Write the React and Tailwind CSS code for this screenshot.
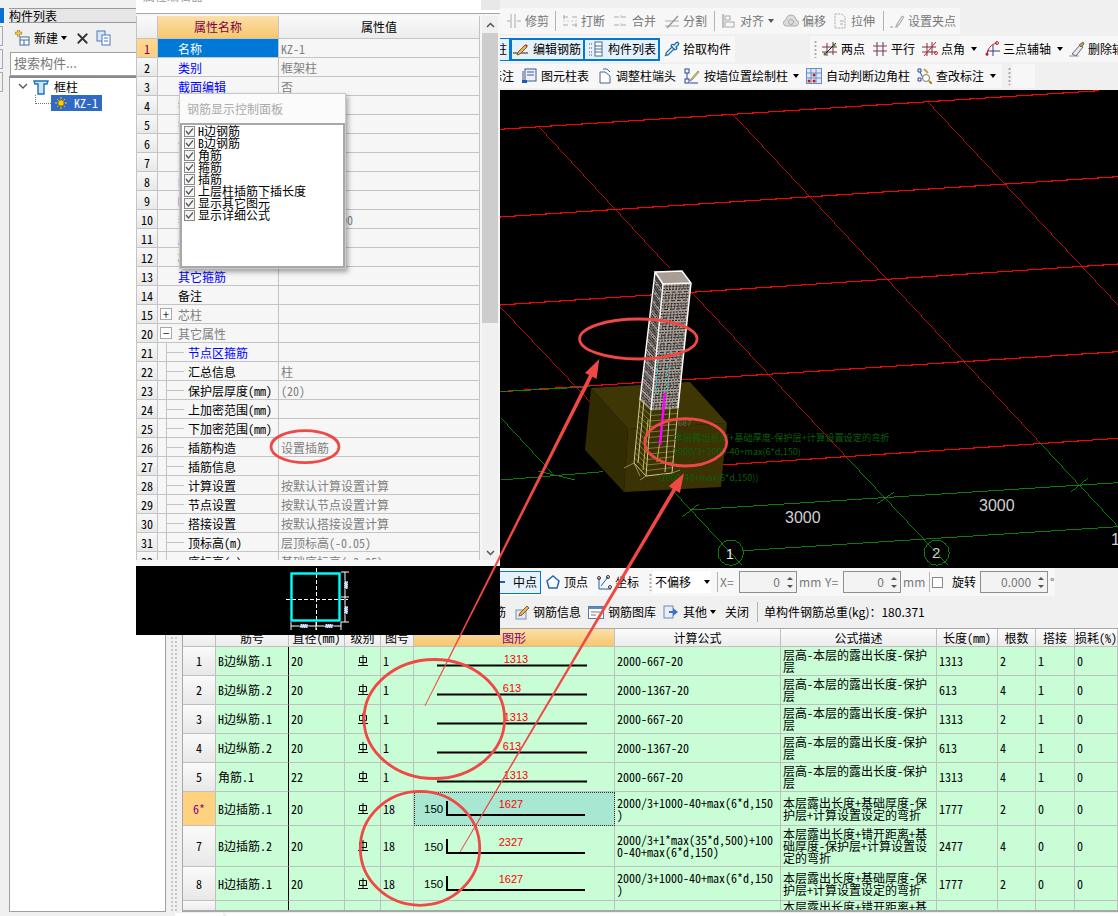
import { Pipette, X as XIcon } from 'lucide-react';

const MONO = "font-['Noto_Sans_Mono_CJK_SC','Noto_Sans_CJK_SC',monospace]";

function Ico({ children, className = '' }) {
  return (
    <svg width="16" height="16" viewBox="0 0 16 16" fill="none" className={`shrink-0 ${className}`}>
      {children}
    </svg>
  );
}

const Caret = ({ className = '' }) => (
  <span className={`h-0 w-0 shrink-0 border-x-[3px] border-t-[4px] border-x-transparent border-t-black ${className}`} />
);
const Sep = ({ className = '' }) => <span className={`h-[20px] w-px shrink-0 bg-[#b4b4b4] ${className}`} />;
const Grip = ({ className = '' }) => (
  <span className={`h-[18px] w-[3px] shrink-0 bg-[radial-gradient(circle,#a8a8a8_1px,transparent_1.2px)] bg-[length:3px_4px] ${className}`} />
);

function Tool({ icon, label, className = '', gap = 'gap-[3px]', muted }) {
  return (
    <span className={`flex shrink-0 items-center ${gap} ${muted ? 'text-[#777]' : 'text-black'} ${className}`}>
      {icon}
      <span className="whitespace-nowrap">{label}</span>
    </span>
  );
}

// grey, disabled edit icons in the first toolbar
const iTrim = <Ico><path d="M5 1v14M9 1v14M1 8h3M11 8h4" stroke="#aaa" /></Ico>;
const iBreak = <Ico><path d="M1 4h5M10 4h5M1 12h5M10 12h5M2 2v4M14 10v4" stroke="#aaa" /><path d="M1 8h14" stroke="#ccc" strokeDasharray="2 2" /></Ico>;
const iMerge = <Ico><path d="M1 4h14M1 12h14" stroke="#aaa" strokeDasharray="5 2" /><path d="M8 2v3M8 10v3" stroke="#ccc" /></Ico>;
const iSplit = <Ico><path d="M1 13h14M1 8h14" stroke="#aaa" /><path d="M3 15 14 3" stroke="#999" strokeWidth="1.5" /></Ico>;
const iAlign = <Ico><path d="M2 1v14" stroke="#888" /><rect x="4" y="3" width="5" height="4" stroke="#aaa" /><rect x="4" y="9" width="9" height="5" stroke="#aaa" /></Ico>;
const iOffset = <Ico><path d="M4 13a3 3 0 0 1-1-6 5 5 0 0 1 10 0 3 3 0 0 1-1 6Z" fill="#ddd" stroke="#aaa" /><circle cx="8" cy="9" r="2.5" stroke="#aaa" /></Ico>;
const iStretch = <Ico><path d="M3 1h7l3 3v11H3Z" stroke="#aaa" strokeDasharray="2 1" /><path d="M8 8h4M8 11h3" stroke="#aaa" /></Ico>;
const iGripPen = <Ico><path d="M1 14h3M6 14h3" stroke="#999" /><path d="m8 11 5-8 2 1-5 8-3 1Z" fill="#ddd" stroke="#aaa" /></Ico>;

// active icons
const iEdit = <Ico><path d="M0 12h15" stroke="#222" /><path d="m5 11 7-7 2 2-7 7-3 1Z" fill="#e8b060" stroke="#8a6020" /><path d="m12 4 1-1 2 2-1 1Z" fill="#c33" /></Ico>;
const iList = <Ico><path d="M1 3h3M1 7h3M1 11h3M1 14h3" stroke="#555" strokeDasharray="1 1" /><rect x="7" y="1" width="7" height="14" fill="#fff" stroke="#4a6a90" /><path d="M7 5h7M7 8h7M7 11h7" stroke="#4a6a90" /></Ico>;
const iTwoPoint = <Ico><path d="M5 2v13M11 1v13M0 6h15M0 11h15" stroke="#7a3040" /><path d="M2 14 14 2" stroke="#222" /><circle cx="3" cy="13" r="1.5" fill="#2a8a2a" /><circle cx="12" cy="4" r="1.5" fill="#2a8a2a" /></Ico>;
const iParallel = <Ico><path d="M5 1v14M11 1v14" stroke="#3a3a7a" /><path d="M1 5h14M1 10h14" stroke="#a03040" /></Ico>;
const iAngle = <Ico><path d="M5 2v13M10 1v13M0 6h14M0 11h14" stroke="#7a3040" /><path d="M2 15 14 1" stroke="#d02020" /><circle cx="14" cy="12" r="1.5" stroke="#d02020" /></Ico>;
const iThreePt = <Ico><path d="M3 15C3 8 7 3 13 2" stroke="#c02020" /><circle cx="3" cy="13" r="1.5" fill="#c02020" /><circle cx="13" cy="2" r="1.5" stroke="#c02020" /><path d="M9 4v11M3 10h13" stroke="#3a3a7a" /></Ico>;
const iEraser = <Ico><path d="M0 15h10" stroke="#999" /><path d="m3 13 8-9 3 2-7 9Z" fill="#e8e8f0" stroke="#667" /><path d="m10 4 4-3 1 2-3 3Z" fill="#c8a040" stroke="#765" /></Ico>;
const iTable = <Ico><rect x="3" y="1" width="11" height="12" fill="#eef" stroke="#3a5a90" /><path d="M5 4h7M5 7h7" stroke="#3a5a90" /><path d="M1 3v10" stroke="#3a5a90" /><rect x="0" y="12" width="5" height="3" fill="#2255bb" /></Ico>;
const iDocFold = <Ico><path d="M3 4h5l5 4v7H3Z" fill="#fff" stroke="#446688" /><path d="M6 1h4l3 3" stroke="#446688" /></Ico>;
const iWallCol = <Ico><rect x="1" y="1" width="4" height="4" stroke="#2244aa" /><rect x="1" y="11" width="4" height="4" stroke="#2244aa" /><path d="M3 5v6M6 15h8" stroke="#2244aa" /><path d="m7 11 7-8 1 1-7 8-2 1Z" fill="#e8c070" stroke="#996" /></Ico>;
const iGridDots = <Ico><rect x="0.5" y="0.5" width="15" height="15" fill="#dbe8fb" stroke="#6a8fc0" /><path d="M5 1v14M10 1v14M1 5h14" stroke="#6a8fc0" /><path d="M1 10h14" stroke="#6a8fc0" /><circle cx="3" cy="13" r="1.5" fill="#d01818" /><circle cx="8" cy="13" r="1.5" fill="#d01818" /><circle cx="8" cy="7" r="1.5" fill="#d01818" /></Ico>;
const iSearchMark = <Ico><path d="M2 1h3v3H2ZM2 10h3v3H2Z" stroke="#2244aa" /><path d="M4 4l3 6" stroke="#2244aa" /><circle cx="10" cy="10" r="3.5" fill="#fff" stroke="#7a7a60" /><path d="m13 13 3 3" stroke="#a88030" strokeWidth="2" /><path d="m8 1 4 4" stroke="#c8a040" strokeWidth="2" /></Ico>;
const iVertex = <Ico><path d="M8 2 14 7 12 14H4L2 7Z" stroke="#2268b8" strokeWidth="1.5" fill="#fff" /></Ico>;
const iCoord = <Ico><path d="M3 15V4M3 15h12M12 3 5 12" stroke="#2060b0" /><circle cx="3" cy="4" r="1.5" stroke="#333" /><circle cx="12" cy="3" r="1.5" stroke="#333" /><circle cx="14" cy="13" r="1.5" stroke="#333" /></Ico>;
const iInfo = <Ico><rect x="2" y="6" width="10" height="9" fill="#dfe8f4" stroke="#7890b0" /><path d="m6 9 7-7 2 2-7 7-3 1Z" fill="#e8b060" stroke="#8a6020" /></Ico>;
const iLib = <Ico><rect x="0.5" y="2.5" width="15" height="12" fill="#fff" stroke="#5a7aa8" /><rect x="1" y="3" width="14" height="2" fill="#5a8ac8" /><path d="M3 8h9M3 11h5" stroke="#777" /></Ico>;
const iOther = <Ico><rect x="1" y="2" width="9" height="12" fill="#e8eef8" stroke="#7088a8" /><path d="M6 7h4V4l5 4-5 4V9H6Z" fill="#3a70c8" /></Ico>;

function Spin({ value, className }) {
  return (
    <span className={`flex h-[22px] shrink-0 items-center justify-end border border-[#8e8e8e] bg-[#f3f3f3] pr-[3px] text-[#777] ${className}`}>
      <span>{value}</span>
      <span className="ml-[7px] flex flex-col gap-[5px]">
        <span className="h-0 w-0 border-x-[3px] border-b-[3px] border-x-transparent border-b-[#555]" />
        <span className="h-0 w-0 border-x-[3px] border-t-[3px] border-x-transparent border-t-[#555]" />
      </span>
    </span>
  );
}

function LeftPanel() {
  return (
    <div className="flex h-[912px] w-[166px] shrink-0">
      <div className="flex w-[9px] shrink-0 flex-col pt-2">
        <div className="h-[15px] w-[4px] bg-[#0a70d0]" />
        <div className="mt-[3px] h-[20px] w-[3px] border border-l-0 border-[#aaa]" />
        <div className="mt-[3px] h-[20px] w-[3px] border border-l-0 border-[#aaa]" />
        <div className="mt-[3px] h-[20px] w-[3px] border border-l-0 border-[#aaa]" />
      </div>
      <div className="flex min-w-0 flex-1 flex-col pt-2">
        <div className="flex h-[15px] items-center border-y border-[#9a9a9a] bg-[#e6e6e6] leading-none">构件列表</div>
        <div className="mt-[3px] flex h-[24px] items-center pl-[5px]">
          <svg width="16" height="16" viewBox="0 0 16 16" className="shrink-0">
            <path d="M2 3h3V0h3v3h3v3H8v3H5V6H2Z" fill="#f0d060" stroke="#a08020" transform="scale(.7)" />
            <rect x="6" y="7" width="9" height="8" fill="#fff" stroke="#3a6aa0" />
            <path d="M6 10h9M10 10v5" stroke="#3a6aa0" />
          </svg>
          <span className="ml-[4px]">新建</span>
          <Caret className="ml-[3px]" />
          <XIcon size={17} strokeWidth={2.5} className="ml-[7px] text-[#333]" />
          <svg width="16" height="16" viewBox="0 0 16 16" className="ml-[5px]">
            <rect x="1" y="1" width="8" height="10" fill="#d8e6f8" stroke="#4a78b8" />
            <rect x="6" y="5" width="8" height="10" fill="#fff" stroke="#4a78b8" />
            <path d="M8 8h4M8 11h4" stroke="#4a78b8" />
          </svg>
        </div>
        <div className="ml-px mt-[2px] flex h-[24px] items-center border border-[#a0a0a0] bg-white pb-[3px] pl-[3px] text-[13px] text-[#777]">搜索构件...</div>
        <div className={`flex-1 border-x border-b border-t-2 border-[#a0a0a0] border-t-[#8a8a8a] bg-white ${MONO}`}>
          <div className="flex h-[17px] items-center pl-[8px]">
            <svg width="10" height="8" viewBox="0 0 10 8" className="shrink-0"><path d="m1 1 4 4 4-4" stroke="#555" strokeWidth="1.3" fill="none" /></svg>
            <svg width="16" height="16" viewBox="0 0 16 16" className="ml-[5px] shrink-0">
              <path d="M1 2h14l-1 3h-3v10H5V5H2Z" fill="#cfe4f8" stroke="#1a70c0" strokeWidth="1.4" />
            </svg>
            <span className="ml-[5px]">框柱</span>
          </div>
          <div className="flex h-[16px] items-center pl-[25px]">
            <span className="h-[9px] w-[16px] -translate-y-[4px] border-b border-l border-dotted border-[#777]" />
            <span className="flex h-[16px] w-[51px] items-center bg-[#316ac5] pl-[4px] text-white">
              <svg width="12" height="12" viewBox="0 0 12 12" className="shrink-0">
                <circle cx="6" cy="6" r="3" fill="#fc0" stroke="#a80" />
                <path d="M6 0v12M0 6h12M2 2l8 8M10 2l-8 8" stroke="#fc0" strokeDasharray="2 8" strokeDashoffset="0" />
              </svg>
              <span className="ml-[7px]">KZ-1</span>
            </span>
          </div>
        </div>
      </div>
    </div>
  );
}

const BLUE = 'text-[#0000ff]';
const GREY = 'text-[#808080]';

const propRows = [
  { no: 1, name: '名称', value: 'KZ-1', selected: true },
  { no: 2, name: '类别', value: '框架柱', nameClass: BLUE },
  { no: 3, name: '截面编辑', value: '否', nameClass: BLUE },
  { no: 4, name: '截面宽度', value: '500' },
  { no: 5, name: '截面高度', value: '500' },
  { no: 6, name: '全部纵筋' },
  { no: 7, name: '角筋', nameClass: BLUE },
  { no: 8, name: 'B边中部筋', nameClass: BLUE },
  { no: 9, name: 'H边中部筋', nameClass: BLUE },
  { no: 10, name: '箍筋', value: ' C10@100/200', nameClass: BLUE },
  { no: 11, name: '肢数', nameClass: BLUE },
  { no: 12, name: '柱类型' },
  { no: 13, name: '其它箍筋', nameClass: BLUE },
  { no: 14, name: '备注' },
  { no: 15, name: '芯柱', nameClass: GREY, box: '+' },
  { no: 20, name: '其它属性', nameClass: GREY, box: '−' },
  { no: 21, name: '节点区箍筋', nameClass: BLUE, sub: true },
  { no: 22, name: '汇总信息', value: '柱', sub: true },
  { no: 23, name: '保护层厚度(mm)', value: '(20)', sub: true },
  { no: 24, name: '上加密范围(mm)', sub: true },
  { no: 25, name: '下加密范围(mm)', sub: true },
  { no: 26, name: '插筋构造', value: '设置插筋', sub: true },
  { no: 27, name: '插筋信息', sub: true },
  { no: 28, name: '计算设置', value: '按默认计算设置计算', sub: true },
  { no: 29, name: '节点设置', value: '按默认节点设置计算', sub: true },
  { no: 30, name: '搭接设置', value: '按默认搭接设置计算', sub: true },
  { no: 31, name: '顶标高(m)', value: '层顶标高(-0.05)', sub: true },
  { no: 32, name: '底标高(m)', value: '基础底标高(-3.05)', sub: true },
];

const panelItems = ['H边钢筋', 'B边钢筋', '角筋', '箍筋', '插筋', '上层柱插筋下插长度', '显示其它图元', '显示详细公式'];

function PropRow({ row }) {
  return (
    <div className="flex h-[19px] shrink-0 border-b border-[#c4c4c4] leading-[19px]">
      <div className={`flex w-[21px] shrink-0 justify-center border-r border-[#c4c4c4] bg-[linear-gradient(#f8f8f8,#e8e8e8)] ${row.selected ? 'bg-[linear-gradient(#ffd890,#ffcf80)] text-[#800060]' : ''}`}>{row.no}</div>
      <div className={`relative w-[121px] shrink-0 overflow-hidden whitespace-nowrap border-r border-[#c4c4c4] ${row.sub ? 'pl-[30px]' : 'pl-[20px]'} ${row.selected ? 'bg-[#0078d7] text-white' : row.nameClass || 'text-black'}`}>
        {row.box && (
          <span className="absolute left-[2px] top-[3px] flex h-[12px] w-[12px] items-center justify-center border border-[#a8a8a8] bg-white leading-none text-[#333]">{row.box}</span>
        )}
        {row.sub && (
          <>
            <span className="absolute bottom-0 left-[8px] top-0 w-px bg-[#c4c4c4]" />
            <span className="absolute left-[8px] top-[9px] h-px w-[18px] bg-[#c4c4c4]" />
          </>
        )}
        {row.name}
      </div>
      <div className={`min-w-0 flex-1 overflow-hidden whitespace-pre pl-[2px] ${GREY}`}>{row.value}</div>
    </div>
  );
}

function RebarPanel() {
  return (
    <div className="absolute left-[43px] top-[93px] flex h-[176px] w-[167px] flex-col border border-[#c8c8c8] bg-[#fbfbfb] shadow-[2px_3px_5px_rgba(0,0,0,0.35)]">
      <div className="flex h-[29px] shrink-0 items-center pl-[7px] font-['Noto_Sans_CJK_SC',sans-serif] text-[#aaa]">钢筋显示控制面板</div>
      <div className="flex-1 border-2 border-[#a8a8a8] bg-white pl-[2px]">
        {panelItems.map((item) => (
          <div key={item} className="flex h-[12px] items-center leading-[12px]">
            <span className="flex h-[11px] w-[11px] shrink-0 items-center justify-center border border-[#8a8a8a] bg-[#f4f4f4]">
              <svg width="9" height="9" viewBox="0 0 9 9"><path d="m1 4 2.5 3L8 1.5" stroke="#555" strokeWidth="1.2" fill="none" /></svg>
            </span>
            <span className="ml-[3px] whitespace-nowrap">{item}</span>
          </div>
        ))}
      </div>
    </div>
  );
}

function SectionPreview() {
  return (
    <svg width="364" height="69" viewBox="136 566 364 69" className="block shrink-0">
      <rect x="136" y="566" width="364" height="69" fill="#000" />
      <path d="M316.5 568v62M286 599.5h62" stroke="#fff" strokeDasharray="4 2" />
      <rect x="291.5" y="573.5" width="48" height="47" fill="none" stroke="#00ffff" strokeWidth="2.4" />
      <path d="M345 572v50M341 572h8M341 622h8M341 597h8M291 626h50M291 622v8M341 622v8M316 622v8" stroke="#fff" />
      <path d="M344 581h4v8h-4ZM344 606h4v8h-4ZM300 624h8v4h-8ZM325 624h8v4h-8Z" fill="#cfe0ff" stroke="#222" strokeDasharray="1 1" />
    </svg>
  );
}

function PropertyDialog() {
  return (
    <div className={`absolute left-[136px] top-0 flex h-[635px] w-[364px] flex-col bg-[#f6f6f6] ${MONO}`}>
      <div className="relative h-[14px] shrink-0 overflow-hidden border-b border-[#a8a8a8] bg-white">
        <span className="absolute left-[7px] top-[-10px] font-['Noto_Sans_CJK_SC',sans-serif] text-[#999]">属性编辑器</span>
        <span className="absolute right-0 top-0 h-[10px] w-[19px] bg-[#e8e8e8]" />
      </div>
      <div className="flex min-h-0 flex-1 items-start pt-[2px]">
        <div className="flex h-[544px] w-[344px] shrink-0 flex-col overflow-hidden border-x border-[#c4c4c4]">
          <div className="flex h-[23px] shrink-0 border-b border-[#c4c4c4] leading-[22px]">
            <div className="w-[21px] shrink-0 border-r border-[#c4c4c4] bg-[linear-gradient(#fafafa,#ececec)]" />
            <div className="w-[121px] shrink-0 border-r border-[#c4c4c4] bg-[linear-gradient(#fbe0a8,#f6c66e)] text-center text-[#800040]">属性名称</div>
            <div className="flex-1 bg-[linear-gradient(#fafafa,#ececec)] text-center">属性值</div>
          </div>
          {propRows.map((row) => <PropRow key={row.no} row={row} />)}
        </div>
        <div className="ml-[2px] flex h-[544px] w-[16px] shrink-0 flex-col bg-[#f0f0f0]">
          <div className="flex h-[17px] shrink-0 items-center justify-center">
            <svg width="9" height="6" viewBox="0 0 9 6"><path d="m1 5 3.5-3.5L8 5" stroke="#555" strokeWidth="1.5" fill="none" /></svg>
          </div>
          <div className="h-[290px] shrink-0 bg-[#cdcdcd]" />
          <div className="flex flex-1 items-end justify-center pb-[4px]">
            <svg width="9" height="6" viewBox="0 0 9 6"><path d="m1 1 3.5 3.5L8 1" stroke="#555" strokeWidth="1.5" fill="none" /></svg>
          </div>
        </div>
      </div>
      <SectionPreview />
      <RebarPanel />
    </div>
  );
}

// maps a height factor t (0 top, 1 bottom) onto a pillar edge
const lerp = (a, b, t) => [a[0] + (b[0] - a[0]) * t, a[1] + (b[1] - a[1]) * t];

function Pillar() {
  const upper = { l: [[655, 272], [640, 400]], f: [[663, 284], [651, 410]], r: [[691, 283], [678, 408]] };
  const lower = { l: [[640, 400], [634, 463]], f: [[651, 410], [646, 476]], r: [[678, 408], [672, 473]] };
  const mesh = [];
  for (let i = 1; i < 44; i++) {
    const t = i / 44;
    const a = lerp(upper.l[0], upper.l[1], t), b = lerp(upper.f[0], upper.f[1], t), c = lerp(upper.r[0], upper.r[1], t);
    mesh.push(<path key={`u${i}`} d={`M${a}L${b}L${c}`} stroke="#111" strokeWidth="0.9" strokeDasharray={i % 3 ? '2 1' : '4 2'} fill="none" />);
  }
  const vertical = [];
  for (let i = 1; i < 8; i++) {
    const u = i / 8;
    const top = lerp(upper.l[0], upper.f[0], u), bot = lerp(upper.l[1], upper.f[1], u);
    const top2 = lerp(upper.f[0], upper.r[0], u), bot2 = lerp(upper.f[1], upper.r[1], u);
    vertical.push(<path key={`v${i}`} d={`M${top}L${bot}M${top2}L${bot2}`} stroke="#2a2a2a" strokeWidth="0.7" strokeDasharray="6 4" />);
  }
  const lowerMesh = [];
  for (let i = 0; i < 12; i++) {
    const t = i / 12;
    const a = lerp(lower.l[0], lower.l[1], t), b = lerp(lower.f[0], lower.f[1], t), c = lerp(lower.r[0], lower.r[1], t);
    lowerMesh.push(<path key={`l${i}`} d={`M${a}L${b}L${c}`} stroke="#a8a468" fill="none" strokeWidth="0.6" />);
  }
  return (
    <g>
      <path d="M655 272 682 271 691 283 678 408 651 410 640 400Z" fill="#a89e96" />
      {mesh}
      {vertical}
      {lowerMesh}
      <path d="M640 400 634 463 646 476 672 473 678 408M651 410 646 476M644 400 638 463M670 408 665 472" stroke="#cdc98f" fill="none" />
      <path d="M634 463 624 468M634 463 640 476M672 473 680 470M646 476 640 480" stroke="#b8b478" strokeWidth="0.7" />
      <path d="M648 420 643 470M660 440 657 462" stroke="#c8c020" />
      <path d="M658 360 656 394M668 366 666 394" stroke="#00e8f0" strokeDasharray="2 2" />
      <path d="M665 393 660 445" stroke="#ff00ff" strokeWidth="2.5" />
      <path d="M655 272 682 271 691 283 663 284ZM655 272 640 400M663 284 651 410M691 283 678 408" stroke="#fff" strokeWidth="1.4" fill="none" />
    </g>
  );
}

function ModelView() {
  return (
    <svg width="952" height="478" viewBox="166 90 952 478" className="block shrink-0 bg-black">
      {/* main grid */}
      <g stroke="#ff0000" strokeWidth="1.1" fill="none" shapeRendering="crispEdges">
        <path d="M500 129.3 1099 90.7M500 217 1118 176.7M500 305 1118 264M500 391.6 1118 351.7M700 466.5 1118 438.3" />
      </g>
      <g stroke="#e01010" strokeWidth="0.8" fill="none" shapeRendering="crispEdges">
        <path d="M539.4 127.3 669.5 268M691 291.7 846 456.7M732.6 114 1039 441.7M927.6 101.7 1118 305M500 306.7 590 401.7" />
      </g>
      <g stroke="#0c8a0c" strokeWidth="0.9" fill="none" shapeRendering="crispEdges">
        <path d="M501 391.7 590 386.7M501 418 552 473M501 480 603 471.7M538 471 575 480" />
        <path d="M846 456.7 948 565M1039 441.7 1118 526.7M675 493 742 565" />
        <path d="M690 510 1118 482.7M743 550.7 1118 526.7" />
        <path d="M682 517 699 504M877 504 894 492M1071 492 1088 478" />
        <circle cx="730.7" cy="552.7" r="12.7" />
        <circle cx="936.7" cy="552.7" r="12.5" />
      </g>
      {/* foundation */}
      <path d="M591 388 690 382 727 423 628 429Z" fill="#3e3605" />
      <path d="M591 388 628 429 624 492 585 450Z" fill="#322c02" />
      <path d="M628 429 727 423 721 487 624 492Z" fill="#3b3304" />
      <Pillar />
      <g fill="#0b5f0b" className="font-['Noto_Sans_CJK_SC',sans-serif]">
        <text x="674" y="441" fontSize="9.2">本层露出长度+基础厚度-保护层+计算设置设定的弯折</text>
        <text x="673" y="455" fontSize="9">2000/3+1000-40+max(6*d,150)</text>
        <text x="658" y="481" fontSize="9">(1000-40+max(6*d,150))</text>
        <text x="678" y="426" fontSize="8" fill="#6a6a5a">687</text>
      </g>
      <g fill="#d0d0d0" className="font-['Liberation_Sans',sans-serif]" fontSize="16">
        <text x="785" y="523">3000</text>
        <text x="979" y="511">3000</text>
        <text x="1111" y="545">1</text>
        <text x="726" y="559" fontSize="14" fill="#eee">1</text>
        <text x="932" y="558" fontSize="15">2</text>
      </g>
    </svg>
  );
}

function Toolbars() {
  return (
    <>
      <div className="ml-[324px] mt-2 flex h-[26px] w-[470px] shrink-0 items-center gap-[8px] bg-[#f7f7f7] pl-[16px]">
        <Tool muted icon={iTrim} label="修剪" />
        <Sep className="-mx-[2px]" />
        <Tool muted icon={iBreak} label="打断" />
        <Tool muted icon={iMerge} label="合并" />
        <Tool muted icon={iSplit} label="分割" />
        <Sep className="-ml-[1px]" />
        <Tool muted icon={iAlign} label="对齐" className="-ml-[2px]" />
        <Caret className="-ml-[4px] !border-t-[#555]" />
        <Tool muted icon={iOffset} label="偏移" className="ml-[1px]" />
        <Tool muted icon={iStretch} label="拉伸" className="-ml-[2px]" />
        <Sep />
        <Tool muted icon={iGripPen} label="设置夹点" className="-ml-[3px]" />
      </div>

      <div className="mt-[2px] flex h-[26px] shrink-0 items-center">
        <div className="ml-[324px] flex h-full w-[245px] shrink-0 items-center bg-[#f7f7f7]">
          <span className="flex h-[23px] w-[20px] shrink-0 items-center justify-end border border-[#0078d7] bg-[#e5f1fb] pr-[2px]">柱</span>
          <span className="flex h-[23px] w-[75px] shrink-0 items-center gap-[4px] border-2 border-[#0078d7] bg-[#e5f1fb] pl-[1px]">{iEdit}编辑钢筋</span>
          <span className="flex h-[23px] w-[75px] shrink-0 items-center gap-[2px] border-2 border-l-0 border-[#0078d7] bg-[#e5f1fb] pl-[3px]">{iList}<span className="ml-[2px]">构件列表</span></span>
          <Tool icon={<Pipette size={16} className="text-[#1b6fb5]" />} label="拾取构件" className="ml-[4px]" />
        </div>
        <div className="ml-[75px] flex h-full flex-1 items-center overflow-hidden bg-[#f7f7f7] pl-[4px]">
          <Grip />
          <Tool icon={iTwoPoint} label="两点" className="ml-[5px]" />
          <Tool icon={iParallel} label="平行" className="ml-[7px]" />
          <Tool icon={iAngle} label="点角" className="ml-[7px]" />
          <Caret className="ml-[6px]" />
          <Tool icon={iThreePt} label="三点辅轴" className="ml-[7px]" />
          <Caret className="ml-[6px]" />
          <Tool icon={iEraser} label="删除辅轴" className="ml-[6px]" />
        </div>
      </div>

      <div className="mt-[2px] flex h-[24px] shrink-0 items-center">
        <div className="ml-[324px] flex h-full w-[512px] shrink-0 items-center bg-[#f7f7f7]">
          <span className="w-[24px] shrink-0 text-right">标注</span>
          <Tool icon={iTable} label="图元柱表" className="ml-[8px]" />
          <Tool icon={iDocFold} label="调整柱端头" className="ml-[8px]" />
          <Tool icon={iWallCol} label="按墙位置绘制柱" className="ml-[8px]" gap="gap-[4px]" />
          <Caret className="ml-[5px]" />
          <Tool icon={iGridDots} label="自动判断边角柱" className="ml-[7px]" gap="gap-[4px]" />
          <Tool icon={iSearchMark} label="查改标注" className="ml-[6px]" gap="gap-[4px]" />
          <Caret className="ml-[6px]" />
        </div>
        <Grip className="ml-[6px]" />
        <span className="ml-[1px] h-full w-[23px] bg-[#f7f7f7]" />
      </div>
    </>
  );
}

function SnapBar() {
  return (
    <div className="ml-[324px] flex h-[28px] w-[565px] shrink-0 items-center bg-[#f7f7f7]">
      <span className="flex h-[23px] w-[51px] shrink-0 items-center justify-end border border-[#0078d7] bg-[#e5f1fb] pr-[3px]">
        <span className="mr-[8px] h-[2px] w-[7px] bg-[#2060b0]" />
        中点
      </span>
      <Tool icon={iVertex} label="顶点" className="ml-[4px]" />
      <Tool icon={iCoord} label="坐标" className="ml-[8px]" />
      <Grip className="ml-[10px]" />
      <span className="ml-px flex h-[22px] w-[58px] shrink-0 items-center bg-white pl-[2px]">
        不偏移
        <Caret className="ml-[13px]" />
      </span>
      <Sep className="ml-[6px]" />
      <span className="ml-[2px] w-[19px] shrink-0 text-[#777]">X=</span>
      <Spin value="0" className="w-[58px]" />
      <span className="ml-[2px] w-[26px] shrink-0 text-[#777]">mm</span>
      <span className="w-[18px] shrink-0 text-[#777]">Y=</span>
      <Spin value="0" className="w-[58px]" />
      <span className="ml-[2px] w-[26px] shrink-0 text-[#777]">mm</span>
      <Sep />
      <span className="ml-[2px] h-[11px] w-[11px] shrink-0 border border-[#888] bg-white" />
      <span className="ml-[9px] shrink-0">旋转</span>
      <Spin value="0.000" className="ml-[4px] w-[68px]" />
      <span className="ml-[2px] text-[#555]">°</span>
    </div>
  );
}

function RebarBar() {
  return (
    <div className="ml-[324px] flex h-[30px] shrink-0 items-center pb-[2px]">
      <span className="w-[16px] shrink-0 text-right">筋</span>
      <Tool icon={iInfo} label="钢筋信息" className="ml-[8px]" />
      <Tool icon={iLib} label="钢筋图库" className="ml-[7px]" gap="gap-[4px]" />
      <Tool icon={iOther} label="其他" className="ml-[7px]" gap="gap-[4px]" />
      <Caret className="ml-[3px]" />
      <span className="ml-[9px]">关闭</span>
      <Sep className="ml-[8px]" />
      <span className="ml-[6px] whitespace-nowrap">单构件钢筋总重(kg)：180.371</span>
    </div>
  );
}

const COLS = 'grid-cols-[33px_73px_56px_36px_33px_201px_166px_156px_61px_38px_39px_43px]';
const layerDesc = '层高-本层的露出长度-保护层';
const dowelDesc = '本层露出长度+基础厚度-保护层+计算设置设定的弯折';
// the source grid breaks before the closing bracket, which CSS line breaking refuses to do
const f1 = '2000/3+1000-40+max(6*d,150\n)';

const rebars = [
  { no: '1', name: 'B边纵筋.1', d: 20, fig: 1, num: 1313, formula: '2000-667-20', desc: layerDesc, len: 1313, n: 2, lap: 1, h: 29 },
  { no: '2', name: 'B边纵筋.2', d: 20, fig: 1, num: 613, formula: '2000-1367-20', desc: layerDesc, len: 613, n: 4, lap: 1, h: 29 },
  { no: '3', name: 'H边纵筋.1', d: 20, fig: 1, num: 1313, formula: '2000-667-20', desc: layerDesc, len: 1313, n: 2, lap: 1, h: 29 },
  { no: '4', name: 'H边纵筋.2', d: 20, fig: 1, num: 613, formula: '2000-1367-20', desc: layerDesc, len: 613, n: 4, lap: 1, h: 29 },
  { no: '5', name: '角筋.1', d: 22, fig: 1, num: 1313, formula: '2000-667-20', desc: layerDesc, len: 1313, n: 4, lap: 1, h: 29 },
  { no: '6*', name: 'B边插筋.1', d: 20, fig: 18, num: 1627, formula: f1, desc: dowelDesc, len: 1777, n: 2, lap: 0, h: 34, active: true },
  { no: '7', name: 'B边插筋.2', d: 20, fig: 18, num: 2327, formula: '2000/3+1*max(35*d,500)+1000-40+max(6*d,150)', desc: '本层露出长度+错开距离+基础厚度-保护层+计算设置设定的弯折', len: 2477, n: 4, lap: 0, h: 41, dy: 4 },
  { no: '8', name: 'H边插筋.1', d: 20, fig: 18, num: 1627, formula: f1, desc: dowelDesc, len: 1777, n: 2, lap: 0, h: 34 },
  { no: '', name: '', d: '', fig: '', formula: '', desc: '本层露出长度+错开距离+基', h: 11, empty: true },
];

function Figure({ r }) {
  if (r.empty) return null;
  const hooked = r.fig === 18;
  const dy = r.dy || 0;
  return (
    <svg width="200" height={r.h - 1} className="block font-['Liberation_Sans',sans-serif]">
      {hooked ? (
        <>
          <path d={`M33 ${9 + dy}V${23 + dy}H171`} stroke="#000" strokeWidth="2" fill="none" />
          <text x="10" y={21 + dy} fontSize="11.5" fill="#000">150</text>
          <text x="97" y={16 + dy} fontSize="11" fill="#ff0000" textAnchor="middle">{r.num}</text>
        </>
      ) : (
        <>
          <path d="M23 18.5H173" stroke="#000" strokeWidth="2" />
          <text x={r.num === 613 ? 98 : 102} y="16" fontSize="11" fill="#ff0000" textAnchor="middle">{r.num}</text>
        </>
      )}
    </svg>
  );
}

function Grade() {
  return (
    <svg width="12" height="12" viewBox="0 0 12 12" className="mx-auto">
      <path d="M6 0v10M2.5 2.5h7v5h-7ZM1 10.5h10" stroke="#000" fill="none" />
    </svg>
  );
}

function RebarTable() {
  const cell = 'flex min-w-0 items-center border-r border-b border-[#c0c0c0] pl-[2px]';
  const head = 'flex items-center justify-center border-r border-b border-[#c0c0c0] bg-[linear-gradient(#fcfcfc,#ececec)] whitespace-nowrap overflow-hidden';
  return (
    <div className="flex h-[284px] shrink-0">
      <div className="w-[16px] shrink-0 pl-[4px]">
        <div className="h-full w-[8px] bg-[radial-gradient(circle,#c8c8c8_1px,transparent_1.2px)] bg-[length:4px_4px]" />
      </div>
      <div className={`min-w-0 flex-1 overflow-hidden border-b-2 border-l border-t border-[#a8a8a8] bg-white ${MONO}`}>
        <div className={`grid h-[18px] ${COLS}`}>
          <div className={head} />
          <div className={head}>筋号</div>
          <div className={head}>直径(mm)</div>
          <div className={head}>级别</div>
          <div className={head}>图号</div>
          <div className={`${head} !bg-[linear-gradient(#fbe0a8,#f6c66e)] text-[#800080]`}>图形</div>
          <div className={head}>计算公式</div>
          <div className={head}>公式描述</div>
          <div className={head}>长度(mm)</div>
          <div className={head}>根数</div>
          <div className={head}>搭接</div>
          <div className={head}>损耗(%)</div>
        </div>
        {rebars.map((r, i) => (
          <div key={i} style={{ height: r.h }} className={`grid ${COLS} bg-[#c8fdd6]`}>
            <div className={`${cell} justify-center !pl-0 ${r.active ? 'bg-[#ffd27f] text-[#800080]' : 'bg-[linear-gradient(#fafafa,#e8e8e8)]'}`}>{r.no}</div>
            <div className={`${cell} !border-r-black whitespace-nowrap`}>{r.name}</div>
            <div className={cell}>{r.d}</div>
            <div className={`${cell} !pl-0`}>{r.empty ? null : <Grade />}</div>
            <div className={cell}>{r.fig}</div>
            <div className={`${cell} !pl-0 ${r.active ? 'bg-[#a8e8d2] outline-1 -outline-offset-1 outline-dotted outline-[#333]' : ''}`}><Figure r={r} /></div>
            <div className={`${cell} whitespace-pre-line break-all pr-[3px] leading-[12px]`}>{r.formula}</div>
            <div className={`${cell} break-all leading-[12px] ${r.empty ? '!items-start' : ''}`}>{r.desc}</div>
            <div className={cell}>{r.len}</div>
            <div className={cell}>{r.n}</div>
            <div className={cell}>{r.lap}</div>
            <div className={cell}>{r.empty ? '' : 0}</div>
          </div>
        ))}
      </div>
    </div>
  );
}

// tapered callout arrow, thin at the start and widest just behind the head
function arrowPoints(x1, y1, x2, y2) {
  const len = Math.hypot(x2 - x1, y2 - y1);
  const ux = (x2 - x1) / len, uy = (y2 - y1) / len;
  const nx = -uy, ny = ux;
  const bx = x2 - ux * 19, by = y2 - uy * 19;
  const p = (x, y, w) => `${x + nx * w},${y + ny * w}`;
  return [p(x1, y1, 0.4), p(bx, by, 1.9), p(bx, by, 6.5), `${x2},${y2}`, p(bx, by, -6.5), p(bx, by, -1.9), p(x1, y1, -0.4)].join(' ');
}

function Callouts() {
  const ellipses = [
    [638.3, 339, 58.7, 20],
    [685.7, 442.3, 41, 23.7],
    [305, 446.7, 34, 16],
    [434.3, 719, 70.3, 59.5],
    [420, 848.3, 59.7, 57],
  ];
  return (
    <svg width="1118" height="916" className="pointer-events-none absolute left-0 top-0">
      {ellipses.map(([cx, cy, rx, ry]) => (
        <ellipse key={cx} cx={cx} cy={cy} rx={rx} ry={ry} fill="none" stroke="#f04844" strokeWidth="2.8" />
      ))}
      <polygon points={arrowPoints(425, 705.7, 599.3, 359)} fill="#f04844" />
      <polygon points={arrowPoints(460, 852, 684, 473.3)} fill="#f04844" />
    </svg>
  );
}

export default function App() {
  return (
    <div className="relative flex h-[916px] w-[1118px] overflow-hidden bg-[#f0f0f0] font-['Noto_Sans_CJK_SC',sans-serif] text-[12px] leading-none text-black">
      <LeftPanel />
      <div className="flex h-[916px] min-w-0 flex-1 flex-col">
        <Toolbars />
        <div className="h-[2px] shrink-0" />
        <ModelView />
        <SnapBar />
        <div className="h-[2px] shrink-0" />
        <RebarBar />
        <RebarTable />
        <div className="mt-px flex h-[3px] shrink-0 gap-[3px] pl-[9px]">
          <span className="w-[48px] bg-white" />
          <span className="flex-1 bg-white" />
        </div>
      </div>
      <PropertyDialog />
      <Callouts />
    </div>
  );
}
